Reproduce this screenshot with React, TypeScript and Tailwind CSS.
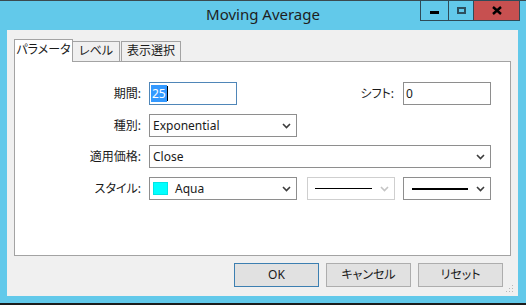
import React from "react";

const font = "font-['Noto_Sans','Noto_Sans_CJK_JP',sans-serif] [font-feature-settings:'palt']";

function Chevron({ disabled }: { disabled?: boolean }) {
	return (
		<svg width="9" height="6" viewBox="0 0 9 6" className="shrink-0">
			<path
				d="M1 1 L4.5 4.5 L8 1"
				fill="none"
				stroke={disabled ? "#c4c4c4" : "#3c3c3c"}
				strokeWidth="1.6"
			/>
		</svg>
	);
}

function Select({
	className,
	children,
	disabled,
}: {
	className: string;
	children?: React.ReactNode;
	disabled?: boolean;
}) {
	return (
		<div
			className={
				"flex items-center h-[23px] bg-white border pl-[3px] pr-[5px] " +
				(disabled ? "border-[#cfcfcf] " : "border-[#8e8e8e] ") +
				className
			}
		>
			<div className="flex-1 flex items-center min-w-0">{children}</div>
			<Chevron disabled={disabled} />
		</div>
	);
}

function Label({ children, className }: { children: string; className: string }) {
	return (
		<div className={"text-right whitespace-nowrap text-[12px] text-[#1a1a1a] " + className}>
			{children}
		</div>
	);
}

export default function App() {
	return (
		<div className={"relative w-[526px] h-[305px] bg-[#62c9ea] flex flex-col " + font}>
			<div className="h-px bg-[#3b4a50]" />
			<div className="h-[29px] flex items-center justify-center text-[15px] text-[#1e1e1e] pb-[2px]">
				Moving Average
			</div>

			{/* caption buttons */}
			<div className="absolute top-0 right-[6px] flex h-[21px]">
				<div className="w-[29px] h-full border border-[#2e4b58] flex items-center justify-center">
					<div className="w-[9px] h-[3px] bg-black mt-[3px]" />
				</div>
				<div className="w-[25px] h-full border-y border-r border-[#2e4b58] flex items-center justify-center">
					<div className="w-[9px] h-[7px] border-2 border-[#2c4f5e]" />
				</div>
				<div className="w-[46px] h-full border-y border-r border-[#2e4b58] bg-[#c75050] flex items-center justify-center">
					<svg width="10" height="9" viewBox="0 0 10 9">
						<path d="M1 1 L9 8 M9 1 L1 8" stroke="#000" strokeWidth="2.4" />
					</svg>
				</div>
			</div>

			<div className="relative ml-[7px] mr-[8px] h-[266px] bg-[#f0f0f0] flex flex-col px-[7px] pt-[9px]">
				{/* tabs */}
				<div className="flex items-end h-[22px] text-[12px] text-[#1a1a1a] whitespace-nowrap">
					<div className="relative z-10 w-[59px] h-[23px] -mb-px bg-white border border-b-0 border-[#a3a3a3] flex items-center justify-center pb-[2px]">
						パラメータ
					</div>
					<div className="w-[47px] h-[20px] bg-[#f0f0f0] border-t border-r border-[#a3a3a3] flex items-center justify-center pb-[1px]">
						レベル
					</div>
					<div className="ml-px w-[60px] h-[20px] bg-[#f0f0f0] border-t border-x border-[#a3a3a3] flex items-center justify-center pb-[1px]">
						表示選択
					</div>
				</div>

				{/* panel */}
				<div className="h-[195px] bg-white border border-[#a3a3a3] pt-[20px] text-[12px] text-[#1a1a1a]">
					<div className="flex items-center h-[23px]">
						<Label className="w-[126px]">期間:</Label>
						<div className="ml-[8px] w-[88px] h-[23px] border border-[#4f86b8] flex items-center pl-[1px]">
							<span className="bg-[#3399ff] text-white leading-[17px] px-px">25</span>
							<span className="w-px h-[15px] bg-black" />
						</div>
						<Label className="ml-auto">シフト:</Label>
						<div className="ml-[9px] mr-[19px] w-[88px] h-[23px] border border-[#8e8e8e] flex items-center pl-[2px]">
							0
						</div>
					</div>

					<div className="flex items-center h-[23px] mt-[9px]">
						<Label className="w-[126px]">種別:</Label>
						<Select className="ml-[8px] w-[148px]">Exponential</Select>
					</div>

					<div className="flex items-center h-[23px] mt-[8px]">
						<Label className="w-[126px]">適用価格:</Label>
						<Select className="ml-[8px] w-[342px]">Close</Select>
					</div>

					<div className="flex items-center h-[23px] mt-[9px]">
						<Label className="w-[126px]">スタイル:</Label>
						<Select className="ml-[8px] w-[148px]">
							<span className="w-[15px] h-[13px] bg-[#00ffff] border border-[#00e5e5]" />
							<span className="ml-[7px]">Aqua</span>
						</Select>
						<Select className="ml-[10px] w-[88px]" disabled>
							<span className="ml-[4px] w-[57px] h-px bg-black" />
						</Select>
						<Select className="ml-[8px] w-[88px]">
							<span className="ml-[5px] w-[56px] h-[2px] bg-black" />
						</Select>
					</div>
				</div>

				{/* buttons */}
				<div className="flex justify-end gap-[7px] mt-[7px] pr-[8px] text-[12px] text-[#1a1a1a]">
					<div className="w-[85px] h-[24px] bg-[#e1e1e1] border border-[#3c7fb1] flex items-center justify-center">
						OK
					</div>
					<div className="w-[85px] h-[24px] bg-[#e1e1e1] border border-[#adadad] flex items-center justify-center">
						キャンセル
					</div>
					<div className="w-[85px] h-[24px] bg-[#e1e1e1] border border-[#adadad] flex items-center justify-center">
						リセット
					</div>
				</div>

				{/* resize grip */}
				<svg className="absolute right-[4px] bottom-[3px]" width="8" height="8" viewBox="0 0 8 8">
					<rect x="6" y="0" width="1" height="1" fill="#b8b8b8" />
					<rect x="3" y="3" width="1" height="1" fill="#b8b8b8" />
					<rect x="6" y="3" width="1" height="1" fill="#b8b8b8" />
					<rect x="0" y="6" width="1" height="1" fill="#b8b8b8" />
					<rect x="3" y="6" width="1" height="1" fill="#b8b8b8" />
					<rect x="6" y="6" width="1" height="1" fill="#b8b8b8" />
				</svg>
			</div>

			<div className="flex-1" />
			<div className="h-[2px] bg-[#1c1c1c]" />
		</div>
	);
}
